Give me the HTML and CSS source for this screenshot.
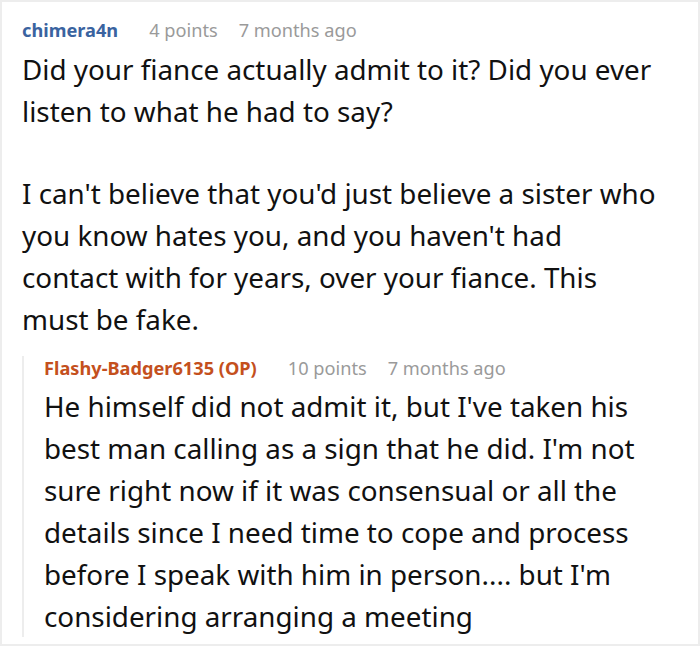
FILE: index.html
```html
<!DOCTYPE html>
<html>
<head>
<meta charset="utf-8">
<link rel="stylesheet" href="styles.css">
</head>
<body>
<div class="frame">
  <div class="comment">
    <div class="meta">
      <span class="user">chimera4n</span>
      <span class="info">4 points</span>
      <span class="info">7 months ago</span>
    </div>
    <div class="body">
      <p>Did your fiance actually admit to it? Did you ever listen to what he had to say?</p>
      <p>I can't believe that you'd just believe a sister who you know hates you, and you haven't had contact with for years, over your fiance. This must be fake.</p>
    </div>
    <div class="reply">
      <div class="meta">
        <span class="user op">Flashy-Badger6135 (OP)</span>
        <span class="info">10 points</span>
        <span class="info">7 months ago</span>
      </div>
      <div class="body">
        <p>He himself did not admit it, but I've taken his best man calling as a sign that he did. I'm not sure right now if it was consensual or all the details since I need time to cope and process before I speak with him in person.... but I'm considering arranging a meeting</p>
      </div>
    </div>
  </div>
</div>
</body>
</html>
```

FILE: styles.css
```css
html, body {
  margin: 0;
  padding: 0;
  background: #ffffff;
}
.frame {
  width: 700px;
  height: 646px;
  box-sizing: border-box;
  border: 2px solid #ededed;
  overflow: hidden;
  font-family: "Noto Sans", "Open Sans", sans-serif;
  color: #111111;
}
.comment {
  padding: 16px 40px 0 20px;
}
.meta {
  display: flex;
  line-height: 24px;
  font-size: 18.2px;
}
.user {
  font-weight: 700;
  color: #3a63a0;
  margin-right: 31px;
}
.user.op {
  color: #c4501d;
}
.info {
  color: #9a9a9a;
  margin-right: 21px;
}
.body {
  margin-top: 6px;
  font-size: 27.8px;
  line-height: 42px;
}
.body p {
  margin: 0 0 40px 0;
}
.body p:last-child {
  margin-bottom: 0;
}
.reply {
  margin-top: 16px;
  border-left: 2px solid #ededed;
  padding-left: 20px;
}
.reply .body {
  margin-top: 5px;
}
```
